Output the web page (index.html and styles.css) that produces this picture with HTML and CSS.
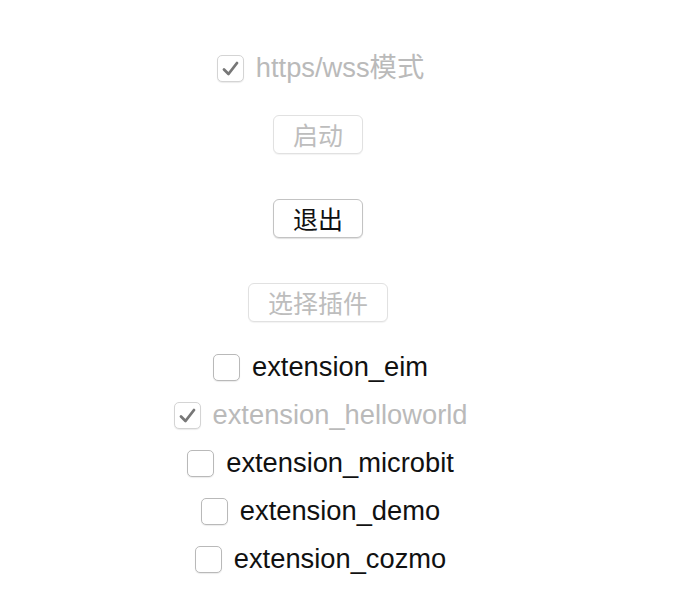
FILE: index.html
```html
<!DOCTYPE html>
<html lang="zh">
<head>
<meta charset="utf-8">
<title>Extensions</title>
<link rel="stylesheet" href="styles.css">
</head>
<body>
<div class="panel">
  <label class="row disabled">
    <span class="box checked"><svg viewBox="0 0 27 27" width="27" height="27"><path d="M7 14.5 L11.5 19 L20 8" fill="none" stroke="#777777" stroke-width="2.8" stroke-linecap="round" stroke-linejoin="round"/></svg></span>
    <span class="txt">https/wss模式</span>
  </label>
  <button class="btn first" disabled>启动</button>
  <button class="btn gap">退出</button>
  <button class="btn gap" disabled>选择插件</button>
  <div class="list">
    <label class="row"><span class="box"></span><span class="txt">extension_eim</span></label>
    <label class="row disabled"><span class="box checked"><svg viewBox="0 0 27 27" width="27" height="27"><path d="M7 14.5 L11.5 19 L20 8" fill="none" stroke="#777777" stroke-width="2.8" stroke-linecap="round" stroke-linejoin="round"/></svg></span><span class="txt">extension_helloworld</span></label>
    <label class="row"><span class="box"></span><span class="txt">extension_microbit</span></label>
    <label class="row"><span class="box"></span><span class="txt">extension_demo</span></label>
    <label class="row"><span class="box"></span><span class="txt">extension_cozmo</span></label>
  </div>
</div>
</body>
</html>
```

FILE: styles.css
```css
html, body {
  margin: 0;
  padding: 0;
  background: #ffffff;
}
body {
  font-family: "Liberation Sans", "Noto Sans CJK SC", sans-serif;
  color: #111111;
}
.panel {
  width: 636px;
  padding-top: 44px;
  display: flex;
  flex-direction: column;
  align-items: center;
}
.row {
  height: 48px;
  margin-left: 5px;
  display: flex;
  align-items: center;
  gap: 12px;
  font-size: 27.3px;
}
.row.disabled {
  color: #bababa;
}
.box {
  width: 25px;
  height: 25px;
  border: 1px solid #b9b9b9;
  border-radius: 5px;
  background: #ffffff;
  box-shadow: 0 1px 1px rgba(0, 0, 0, 0.08);
  display: flex;
  align-items: center;
  justify-content: center;
  flex: none;
}
.box svg {
  display: block;
  margin: -1px;
}
.row.disabled .box {
  border-color: #d4d4d4;
}
.txt {
  line-height: 30px;
  white-space: nowrap;
}
.btn {
  font-family: "Noto Sans CJK SC", sans-serif;
  font-size: 25px;
  height: 39px;
  padding: 0 19px;
  line-height: 37px;
  background: #ffffff;
  color: #111111;
  border: 1px solid #c3c3c3;
  border-radius: 6px;
  box-shadow: 0 1px 1px rgba(0, 0, 0, 0.12);
}
.btn:disabled {
  color: #bdbdbd;
  border-color: #e1e1e1;
  box-shadow: 0 1px 1px rgba(0, 0, 0, 0.05);
}
.btn.first {
  margin-top: 23px;
}
.btn.gap {
  margin-top: 45px;
}
.list {
  margin-top: 21px;
  display: flex;
  flex-direction: column;
  align-items: center;
}
```
